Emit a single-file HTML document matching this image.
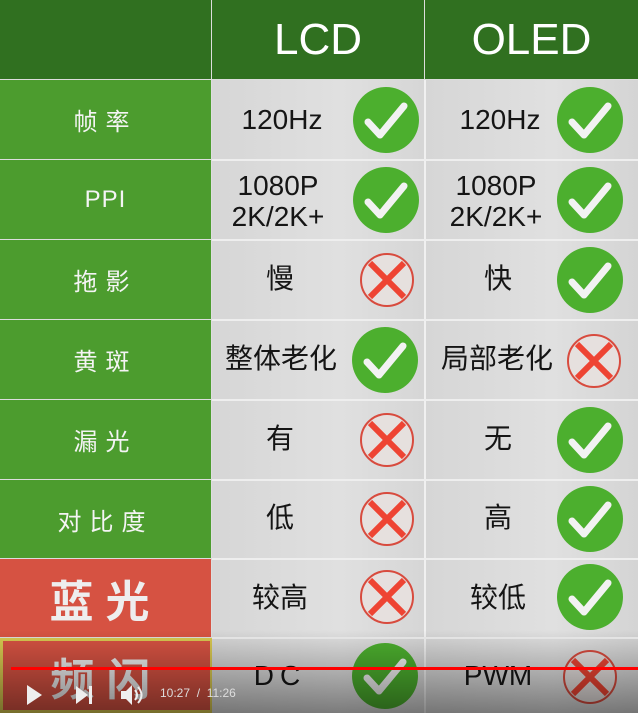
<!DOCTYPE html>
<html><head><meta charset="utf-8"><style>
*{margin:0;padding:0;box-sizing:border-box}
body{width:638px;height:713px;overflow:hidden;background:#ddd;position:relative;font-family:"Liberation Sans","Noto Sans CJK SC",sans-serif}
.c{position:absolute;display:flex;align-items:center;justify-content:center}
.h{background:#307020;color:#fff;font-size:44px}
.l{background:#4c9c2e;color:#f4f4f4;font-size:24px;letter-spacing:8px}
.r{background:#d65242;color:#eee;font-size:44px;font-weight:bold;letter-spacing:12px}
.g{background:linear-gradient(#d4d4d4,#e2e2e2 50%,#d4d4d4);color:#111;font-size:28px;line-height:31px;text-align:center}
.t{position:absolute;text-align:center;color:#151515;font-size:28px;line-height:31px}
svg{position:absolute}
</style></head><body>
<div class="c h" style="left:0;top:0;width:211px;height:79px"></div>
<div class="c h" style="left:212px;top:0;width:212px;height:79px;padding-left:0">LCD</div>
<div class="c h" style="left:425px;top:0;width:213px;height:79px">OLED</div>

<div class="c l" style="left:0;top:80px;width:211px;height:79px">帧率</div>
<div class="c l" style="left:0;top:160px;width:211px;height:79px;letter-spacing:1px">PPI</div>
<div class="c l" style="left:0;top:240px;width:211px;height:79px">拖影</div>
<div class="c l" style="left:0;top:320px;width:211px;height:79px">黄斑</div>
<div class="c l" style="left:0;top:400px;width:211px;height:79px">漏光</div>
<div class="c l" style="left:0;top:480px;width:211px;height:78px">对比度</div>
<div class="c r" style="left:0;top:559px;width:211px;height:78px">蓝光</div>
<div class="c r" style="left:0;top:638px;width:213px;height:75px;border:3px solid #d8c850">频闪</div>

<!-- grey cells -->
<div style="position:absolute;left:212px;top:80px;width:426px;height:633px;background:linear-gradient(90deg,#d6d6d6,#e0e0e0 30%,#d6d6d6 49.8%,#f0f0f0 49.8%,#f0f0f0 50.2%,#d6d6d6 50.2%,#e0e0e0 80%,#d4d4d4)"></div>
<div style="position:absolute;left:212px;top:159px;width:426px;height:2px;background:#eee"></div>
<div style="position:absolute;left:212px;top:239px;width:426px;height:2px;background:#eee"></div>
<div style="position:absolute;left:212px;top:319px;width:426px;height:2px;background:#eee"></div>
<div style="position:absolute;left:212px;top:399px;width:426px;height:2px;background:#eee"></div>
<div style="position:absolute;left:212px;top:479px;width:426px;height:2px;background:#eee"></div>
<div style="position:absolute;left:212px;top:558px;width:426px;height:2px;background:#eee"></div>
<div style="position:absolute;left:212px;top:637px;width:426px;height:2px;background:#eee"></div>

<div class="t" style="left:222px;top:104px;width:120px">120Hz</div>
<div class="t" style="left:440px;top:104px;width:120px">120Hz</div>
<div class="t" style="left:218px;top:170px;width:120px">1080P<br>2K/2K+</div>
<div class="t" style="left:436px;top:170px;width:120px">1080P<br>2K/2K+</div>
<div class="t" style="left:240px;top:263px;width:80px">慢</div>
<div class="t" style="left:458px;top:263px;width:80px">快</div>
<div class="t" style="left:216px;top:343px;width:130px">整体老化</div>
<div class="t" style="left:432px;top:343px;width:130px">局部老化</div>
<div class="t" style="left:240px;top:423px;width:80px">有</div>
<div class="t" style="left:458px;top:423px;width:80px">无</div>
<div class="t" style="left:240px;top:502px;width:80px">低</div>
<div class="t" style="left:458px;top:502px;width:80px">高</div>
<div class="t" style="left:230px;top:582px;width:100px">较高</div>
<div class="t" style="left:448px;top:582px;width:100px">较低</div>
<div class="t" style="left:240px;top:660px;width:80px;letter-spacing:6px">DC</div>
<div class="t" style="left:448px;top:660px;width:100px">PWM</div>

<svg width="638" height="713" style="left:0;top:0">
<defs>
<g id="ok"><circle r="33" fill="#4caf2e"/><path d="M-18 2 L-6 15 L18 -14" stroke="#f2f2f2" stroke-width="7" fill="none" stroke-linecap="round" stroke-linejoin="round"/></g>
<g id="no"><circle r="26" fill="#e6e0de" stroke="#d84b3e" stroke-width="2"/><path d="M-17 -17 L17 17 M17 -17 L-17 17" stroke="#ee4433" stroke-width="6"/></g>
</defs>
<use href="#ok" x="386" y="120"/><use href="#ok" x="590" y="120"/>
<use href="#ok" x="386" y="200"/><use href="#ok" x="590" y="200"/>
<use href="#no" x="387" y="280"/><use href="#ok" x="590" y="280"/>
<use href="#ok" x="385" y="360"/><use href="#no" x="594" y="361"/>
<use href="#no" x="387" y="440"/><use href="#ok" x="590" y="440"/>
<use href="#no" x="387" y="519"/><use href="#ok" x="590" y="519"/>
<use href="#no" x="387" y="597"/><use href="#ok" x="590" y="597"/>
<use href="#ok" x="385" y="676"/><use href="#no" x="590" y="677"/>
</svg>

<div style="position:absolute;left:0;top:630px;width:638px;height:83px;background:linear-gradient(rgba(0,0,0,0),rgba(0,0,0,0.45))"></div>
<div style="position:absolute;left:11px;top:667px;width:627px;height:3px;background:#f00"></div>
<svg width="200" height="30" style="left:20px;top:682px">
<path d="M7 3 L22 13 L7 23 Z" fill="#eee"/>
<path d="M56 4 L68 13 L56 22 Z" fill="#eee"/><rect x="69" y="4" width="3" height="18" fill="#eee"/>
<path d="M101 9 h5 l6 -6 v20 l-6 -6 h-5 z" fill="#eee"/>
<path d="M115 8 q4 5 0 10 M118 5 q7 8 0 16" stroke="#eee" stroke-width="2" fill="none"/>
</svg>
<div style="position:absolute;left:160px;top:686px;color:#ddd;font-size:12px">10:27 &nbsp;/&nbsp; 11:26</div>
</body></html>
